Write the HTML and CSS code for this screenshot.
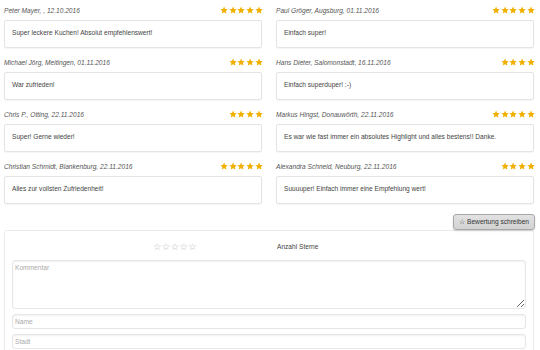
FILE: index.html
```html
<!DOCTYPE html>
<html lang="de">
<head>
<meta charset="utf-8">
<title>Bewertungen</title>
<link rel="stylesheet" href="styles.css">
</head>
<body>
<svg width="0" height="0" class="defs">
  <defs>
    <symbol id="star" viewBox="0 0 24 24"><path d="M12 1.5l3.2 7 7.6.8-5.7 5.2 1.6 7.5L12 18.2 5.3 22l1.6-7.5L1.2 9.3l7.6-.8z"/></symbol>
  </defs>
</svg>
<div class="page">
  <div class="reviews">
    <div class="review">
      <div class="head"><span class="author">Peter Mayer, , 12.10.2016</span><span class="stars s5"><svg><use href="#star"/></svg><svg><use href="#star"/></svg><svg><use href="#star"/></svg><svg><use href="#star"/></svg><svg><use href="#star"/></svg></span></div>
      <div class="card">Super leckere Kuchen! Absolut empfehlenswert!</div>
    </div>
    <div class="review">
      <div class="head"><span class="author">Paul Gröger, Augsburg, 01.11.2016</span><span class="stars"><svg><use href="#star"/></svg><svg><use href="#star"/></svg><svg><use href="#star"/></svg><svg><use href="#star"/></svg><svg><use href="#star"/></svg></span></div>
      <div class="card">Einfach super!</div>
    </div>
    <div class="review">
      <div class="head"><span class="author">Michael Jörg, Meitingen, 01.11.2016</span><span class="stars"><svg><use href="#star"/></svg><svg><use href="#star"/></svg><svg><use href="#star"/></svg><svg><use href="#star"/></svg></span></div>
      <div class="card">War zufrieden!</div>
    </div>
    <div class="review">
      <div class="head"><span class="author">Hans Dieter, Salomonstadt, 16.11.2016</span><span class="stars"><svg><use href="#star"/></svg><svg><use href="#star"/></svg><svg><use href="#star"/></svg><svg><use href="#star"/></svg></span></div>
      <div class="card">Einfach superduper! :-)</div>
    </div>
    <div class="review">
      <div class="head"><span class="author">Chris P., Otting, 22.11.2016</span><span class="stars"><svg><use href="#star"/></svg><svg><use href="#star"/></svg><svg><use href="#star"/></svg><svg><use href="#star"/></svg></span></div>
      <div class="card">Super! Gerne wieder!</div>
    </div>
    <div class="review">
      <div class="head"><span class="author">Markus Hingst, Donauwörth, 22.11.2016</span><span class="stars"><svg><use href="#star"/></svg><svg><use href="#star"/></svg><svg><use href="#star"/></svg><svg><use href="#star"/></svg><svg><use href="#star"/></svg></span></div>
      <div class="card">Es war wie fast immer ein absolutes Highlight und alles bestens!! Danke.</div>
    </div>
    <div class="review">
      <div class="head"><span class="author">Christian Schmidt, Blankenburg, 22.11.2016</span><span class="stars"><svg><use href="#star"/></svg><svg><use href="#star"/></svg><svg><use href="#star"/></svg><svg><use href="#star"/></svg><svg><use href="#star"/></svg></span></div>
      <div class="card">Alles zur vollsten Zufriedenheit!</div>
    </div>
    <div class="review">
      <div class="head"><span class="author">Alexandra Schneid, Neuburg, 22.11.2016</span><span class="stars"><svg><use href="#star"/></svg><svg><use href="#star"/></svg><svg><use href="#star"/></svg><svg><use href="#star"/></svg></span></div>
      <div class="card">Suuuuper! Einfach immer eine Empfehlung wert!</div>
    </div>
  </div>
  <div class="actions">
    <button class="btn" type="button">☆ Bewertung schreiben</button>
  </div>
  <div class="form-box">
    <div class="rate-row">
      <span class="empty-stars">☆☆☆☆☆</span>
      <span class="rate-label">Anzahl Sterne</span>
    </div>
    <textarea class="field area" placeholder="Kommentar"></textarea>
    <input class="field" type="text" placeholder="Name">
    <input class="field" type="text" placeholder="Stadt">
  </div>
</div>
</body>
</html>
```

FILE: styles.css
```css
* { box-sizing: border-box; }
html, body { margin: 0; padding: 0; background: #fff; }
body {
  font-family: "Liberation Sans", Arial, sans-serif;
  font-size: 6.6px;
  color: #444;
  overflow: hidden;
}
.defs { position: absolute; width: 0; height: 0; }
.page {
  width: 530px;
  margin-left: 4px;
}
.reviews {
  display: grid;
  grid-template-columns: 1fr 1fr;
  column-gap: 14px;
  row-gap: 4px;
}
.head {
  height: 20px;
  display: flex;
  align-items: center;
  justify-content: space-between;
}
.author {
  font-style: italic;
  color: #555;
  padding-top: 1px;
}
.stars {
  display: flex;
  gap: 0.5px;
  color: #f1b000;
  margin-right: -1px;
}
.stars svg {
  width: 8.2px;
  height: 8.2px;
  fill: currentColor;
}
.card {
  height: 28px;
  border: 1px solid #e4e4e4;
  border-radius: 2px;
  background: #fff;
  box-shadow: 0 1px 1px rgba(0,0,0,0.04);
  padding: 7px 7px 0;
  line-height: 9px;
  color: #444;
}
.actions {
  display: flex;
  justify-content: flex-end;
  padding-top: 10px;
  margin-right: -1px;
}
.btn {
  font-family: "Liberation Sans", Arial, sans-serif;
  font-size: 6.6px;
  color: #333;
  height: 16px;
  padding: 0 5px;
  border: 1px solid #a8a8a8;
  border-radius: 3px;
  background: linear-gradient(#e2e2e2, #d2d2d2);
  box-shadow: 0 1px 2px rgba(0,0,0,0.15);
}
.form-box {
  border: 1px solid #eaeaea;
  border-radius: 3px;
  padding: 8px 7px 10px;
  display: flex;
  flex-direction: column;
  gap: 5px;
  height: 130px;
}
.rate-row {
  display: flex;
  align-items: center;
  height: 16px;
}
.empty-stars {
  font-family: "DejaVu Sans", sans-serif;
  font-size: 9.5px;
  letter-spacing: 0.3px;
  color: #bdbdbd;
  margin-left: 141px;
  width: 124px;
}
.rate-label {
  color: #444;
}
.field {
  display: block;
  width: 100%;
  height: 15px;
  border: 1px solid #e6e6e6;
  border-radius: 3px;
  background: #fff;
  box-shadow: inset 0 1px 2px rgba(0,0,0,0.06);
  font-family: "Liberation Sans", Arial, sans-serif;
  font-size: 6.6px;
  padding: 0 2px;
  color: #444;
  margin: 0;
}
.field::placeholder { color: #aaa; }
.area {
  height: 50px;
  padding: 3px 2px;
  resize: vertical;
}
```
